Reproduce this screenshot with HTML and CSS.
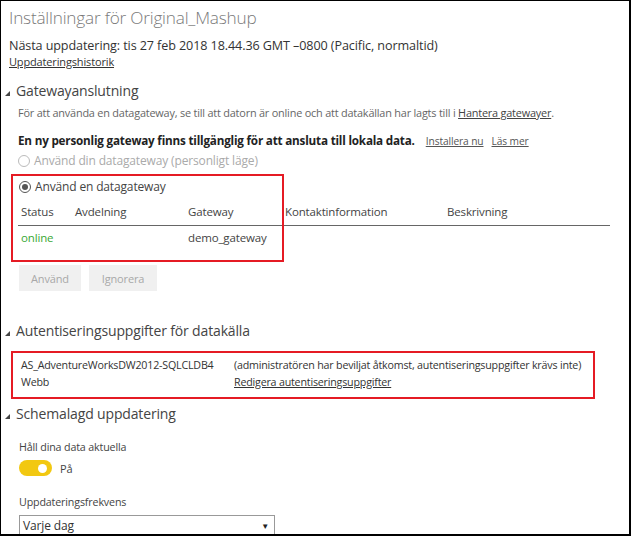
FILE: index.html
```html
<!DOCTYPE html>
<html lang="sv">
<head>
<meta charset="utf-8">
<title>Inställningar för Original_Mashup</title>
<link rel="stylesheet" href="styles.css">
</head>
<body>
<div class="frame">
  <h1 class="title">Inställningar för Original_Mashup</h1>
  <p class="next">Nästa uppdatering: tis 27 feb 2018 18.44.36 GMT –0800 (Pacific, normaltid)</p>
  <a class="link hist">Uppdateringshistorik</a>

  <h2 class="section s1"><span class="tri"></span>Gatewayanslutning</h2>
  <div class="indent">
    <p class="info">För att använda en datagateway, se till att datorn är online och att datakällan har lagts till i <a class="link">Hantera gatewayer</a>.</p>
    <p class="newgw"><b>En ny personlig gateway finns tillgänglig för att ansluta till lokala data.</b><a class="link small first">Installera nu</a><a class="link small">Läs mer</a></p>
    <div class="radio disabled"><span class="rb"></span>Använd din datagateway (personligt läge)</div>
  </div>
  <div class="gwwrap">
    <div class="redbox gwbox"></div>
    <div class="radio checked"><span class="rb"><span class="dot"></span></span>Använd en datagateway</div>
    <div class="table">
      <div class="row head">
        <span class="c1">Status</span><span class="c2">Avdelning</span><span class="c3">Gateway</span><span class="c4">Kontaktinformation</span><span class="c5">Beskrivning</span>
      </div>
      <div class="row body">
        <span class="c1 online">online</span><span class="c2"></span><span class="c3">demo_gateway</span><span class="c4"></span><span class="c5"></span>
      </div>
    </div>
  </div>
  <div class="buttons">
    <button class="btn b1">Använd</button>
    <button class="btn b2">Ignorera</button>
  </div>

  <h2 class="section s2"><span class="tri"></span>Autentiseringsuppgifter för datakälla</h2>
  <div class="redbox credbox">
    <div class="cred">
      <div class="ccol1">AS_AdventureWorksDW2012-SQLCLDB4<br>Webb</div>
      <div class="ccol2">(administratören har beviljat åtkomst, autentiseringsuppgifter krävs inte)<br><a class="link">Redigera autentiseringsuppgifter</a></div>
    </div>
  </div>

  <h2 class="section s3"><span class="tri"></span>Schemalagd uppdatering</h2>
  <div class="sched">
    <div class="lbl">Håll dina data aktuella</div>
    <div class="toggle-row"><span class="toggle"><span class="knob"></span></span><span class="on">På</span></div>
    <div class="lbl freq">Uppdateringsfrekvens</div>
    <div class="select"><span>Varje dag</span><span class="arrow">▼</span></div>
  </div>
</div>
</body>
</html>
```

FILE: styles.css
```css
* { box-sizing: border-box; }
html, body { margin: 0; padding: 0; background: #fff; }
body {
  font-family: "Open Sans", "Noto Sans", sans-serif;
  color: #333;
  width: 631px;
  height: 536px;
  overflow: hidden;
}
.frame {
  width: 631px;
  height: 536px;
  border-top: 1px solid #000;
  border-left: 1px solid #000;
  border-right: 2px solid #000;
  border-bottom: 2px solid #000;
  padding: 0 0 0 8px;
  overflow: hidden;
}
.title {
  margin: 4px 0 0;
  font-weight: 300;
  font-size: 17.2px;
  line-height: 26px;
  color: #7a7a7a;
  letter-spacing: -0.2px;
}
.next {
  margin: 7px 0 0;
  font-size: 12.6px;
  line-height: 16px;
  color: #333;
  letter-spacing: -0.1px;
}
.link {
  color: #333;
  text-decoration: underline;
}
.hist { display: block; font-size: 11px; line-height: 16px; letter-spacing: -0.15px; }
.section {
  margin: 10px 0 0 -4px;
  font-size: 14px;
  font-weight: 400;
  line-height: 22px;
  color: #444;
  display: flex;
  align-items: center;
  letter-spacing: -0.15px;
}
.tri {
  width: 0; height: 0;
  border-left: 5px solid transparent;
  border-bottom: 5px solid #444;
  margin: 4px 6px 0 0;
}
.indent { padding-left: 9px; }
.info {
  margin: 3px 0 0;
  font-size: 10.9px;
  line-height: 16px;
  color: #666;
  letter-spacing: -0.2px;
}
.info .link { color: #444; }
.newgw {
  margin: 11px 0 0;
  font-size: 11.7px;
  line-height: 16px;
  color: #222;
  letter-spacing: -0.2px;
}
.newgw b { font-weight: 700; }
.small { font-size: 10.2px; color: #555; margin-left: 8px; font-weight: 400; letter-spacing: -0.1px; }
.small.first { margin-left: 11px; }
.radio {
  display: flex;
  align-items: center;
  font-size: 12px;
  line-height: 18px;
  letter-spacing: -0.15px;
}
.radio.disabled { color: #aaa; margin-top: 3px; }
.rb {
  width: 12px; height: 12px;
  border: 1px solid #bbb;
  border-radius: 50%;
  margin-right: 4px;
  display: inline-flex;
  align-items: center;
  justify-content: center;
  flex: none;
}
.checked { color: #444; }
.checked .rb { border-color: #555; }
.dot { width: 6px; height: 6px; border-radius: 50%; background: #555; }
.gwwrap {
  position: relative;
  margin: 4px 0 0 2px;
  padding: 4px 0 0 8px;
  width: 610px;
  height: 88px;
}
.redbox { border: 2px solid #e51b24; }
.gwbox {
  position: absolute;
  left: 0; top: 0;
  width: 273px;
  height: 88px;
  pointer-events: none;
}
.table { margin: 0 0 0 -1px; width: 592px; font-size: 11.5px; color: #444; letter-spacing: -0.15px; }
.row { display: flex; }
.row.head { margin-top: 7px; line-height: 18px; padding-bottom: 4px; border-bottom: 1px solid #666; }
.row.body { line-height: 14px; padding-top: 5px; }
.c1 { width: 57px; padding-left: 3px; }
.c2 { width: 113px; }
.c3 { width: 97px; }
.c4 { width: 162px; }
.c5 { flex: 1; }
.online { color: #3aa835; }
.buttons { display: flex; gap: 8px; margin: 3px 0 0 10px; }
.btn {
  font-family: inherit;
  font-size: 11px;
  color: #a8a8a8;
  background: #f0f0f0;
  border: none;
  height: 26px;
  padding: 0;
  letter-spacing: -0.15px;
}
.b1 { width: 62px; }
.b2 { width: 68px; }
.s2 { margin-top: 29px; }
.credbox {
  margin: 9px 0 0 2px;
  width: 584px;
  height: 48px;
  padding: 4px 0 0 8px;
}
.cred { display: flex; font-size: 10.7px; line-height: 17px; color: #333; letter-spacing: -0.2px; }
.ccol1 { width: 213px; }
.s3 { margin-top: 4px; }
.sched { padding-left: 10px; font-size: 10.7px; color: #444; letter-spacing: -0.15px; }
.lbl { margin-top: 14px; line-height: 16px; }
.toggle-row { display: flex; align-items: center; margin-top: 5px; }
.toggle {
  width: 33px; height: 16px;
  border-radius: 8px;
  background: #f2c811;
  position: relative;
  display: inline-block;
}
.knob {
  position: absolute;
  right: 5px; top: 3.5px;
  width: 9px; height: 9px;
  border-radius: 50%;
  background: #fff;
}
.on { margin-left: 8px; font-size: 11px; }
.freq { margin-top: 18px; }
.select {
  margin-top: 5px;
  width: 256px;
  height: 22px;
  border: 1px solid #999;
  display: flex;
  justify-content: space-between;
  align-items: center;
  padding: 0 5px 2px 3px;
  font-size: 12px;
  color: #333;
}
.arrow { font-size: 8px; color: #222; }
```
